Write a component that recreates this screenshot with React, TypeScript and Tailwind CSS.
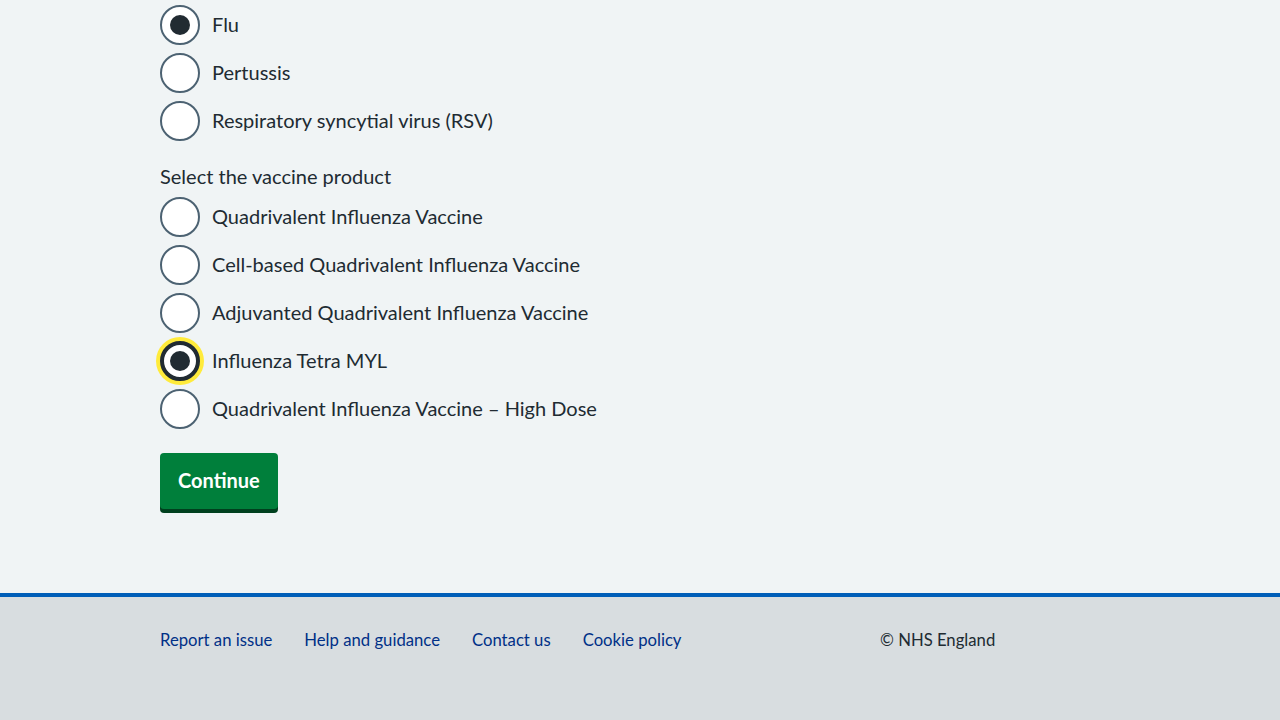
import { useState } from "react";

const DISEASES = ["Flu", "Pertussis", "Respiratory syncytial virus (RSV)"];

const PRODUCTS = [
  "Quadrivalent Influenza Vaccine",
  "Cell-based Quadrivalent Influenza Vaccine",
  "Adjuvanted Quadrivalent Influenza Vaccine",
  "Influenza Tetra MYL",
  "Quadrivalent Influenza Vaccine – High Dose",
];

const FOOTER_LINKS = ["Report an issue", "Help and guidance", "Contact us", "Cookie policy"];

function Radio({ label, checked, focused, onSelect }: { label: string; checked: boolean; focused?: boolean; onSelect: () => void }) {
  return (
    <button type="button" onClick={onSelect} className="flex items-center gap-3 h-10 mb-2 text-left">
      <span
        className={[
          "w-10 h-10 rounded-full bg-white flex items-center justify-center flex-shrink-0",
          focused ? "border-4 border-[#212b32] shadow-[0_0_0_4px_#ffeb3b]" : "border-2 border-[#4c6272]",
        ].join(" ")}
      >
        {checked && <span className="w-5 h-5 rounded-full bg-[#212b32]" />}
      </span>
      <span className="pb-[2px] text-[20px] leading-7 text-[#212b32]">{label}</span>
    </button>
  );
}

export default function App() {
  const [disease, setDisease] = useState("Flu");
  const [product, setProduct] = useState("Influenza Tetra MYL");

  return (
    <div className="min-h-screen flex flex-col bg-[#f0f4f5] font-['Lato',sans-serif]">
      <main className="h-[593px] px-[160px] pt-[5px]">
        <div className="flex flex-col items-start">
          {DISEASES.map(d => (
            <Radio key={d} label={d} checked={disease === d} onSelect={() => setDisease(d)} />
          ))}
        </div>

        <p className="mt-[13px] mb-[7px] text-[20px] leading-7 text-[#212b32]">Select the vaccine product</p>
        <div className="flex flex-col items-start">
          {PRODUCTS.map(p => (
            <Radio
              key={p}
              label={p}
              checked={product === p}
              focused={p === "Influenza Tetra MYL"}
              onSelect={() => setProduct(p)}
            />
          ))}
        </div>

        <button
          type="button"
          className="mt-[16px] h-14 px-[18px] pb-[3px] rounded-[4px] bg-[#007f3b] text-white text-[20px] font-bold shadow-[0_4px_0_#00401e]"
        >
          Continue
        </button>
      </main>

      <footer className="flex-1 bg-[#d8dde0] border-t-4 border-[#005eb8] px-[160px] pt-[31px]">
        <div className="flex">
          <ul className="w-[720px] flex gap-8 text-[16.7px] leading-6">
            {FOOTER_LINKS.map(l => (
              <li key={l}>
                <a href="#" className="text-[#003087]">{l}</a>
              </li>
            ))}
          </ul>
          <p className="text-[16.7px] leading-6 text-[#212b32]">© NHS England</p>
        </div>
      </footer>
    </div>
  );
}
